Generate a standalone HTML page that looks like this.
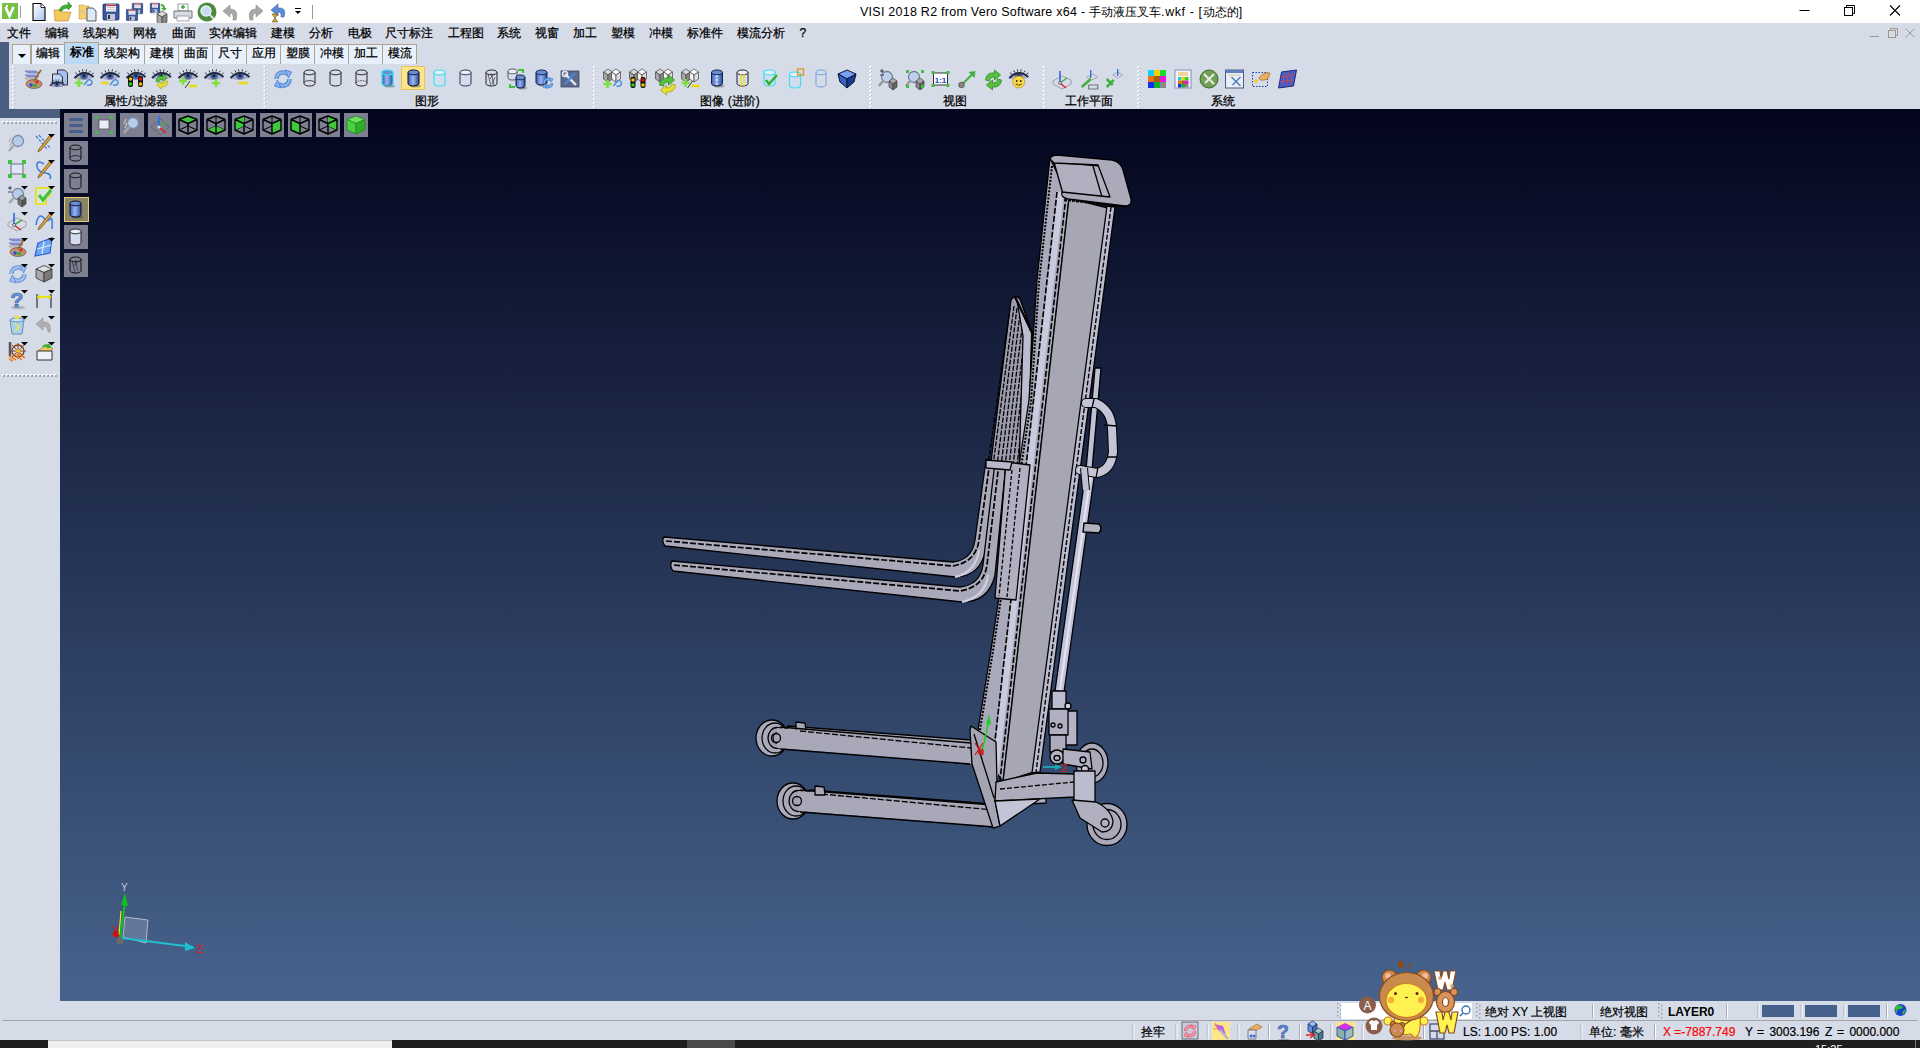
<!DOCTYPE html>
<html><head><meta charset="utf-8">
<style>
*{margin:0;padding:0;box-sizing:border-box}
html,body{width:1920px;height:1048px;overflow:hidden;background:#d6dbe8;font-family:"Liberation Sans",sans-serif;font-size:12px;color:#000}
.a{position:absolute}
#title{left:0;top:0;width:1920px;height:23px;background:#fff}
#menu{left:0;top:23px;width:1920px;height:19px;background:#d6dbe8}
#frameL{left:0;top:42px;width:9px;height:76px;background:#4c5e80}
#frameB{left:0;top:109px;width:60px;height:9px;background:#4c5e80}
#ribbon{left:9px;top:42px;width:1911px;height:67px;background:#d6dbe8}
#vp{left:60px;top:109px;width:1860px;height:892px;background:linear-gradient(#03051d,#47638d)}
#lbar{left:0;top:118px;width:60px;height:883px;background:#d6dbe8}
#st1{left:0;top:1001px;width:1920px;height:20px;background:#d6dbe8}
#st2{left:0;top:1021px;width:1920px;height:19px;background:#d6dbe8}
#task{left:0;top:1040px;width:1920px;height:8px;background:#1f1f1f}

#ttext{left:860px;top:5px;font-size:12.5px;white-space:nowrap;line-height:15px}
.mi{position:absolute;top:2px;line-height:16px;white-space:nowrap;-webkit-text-stroke:0.25px #000}
#tabs{left:0;top:0}
.tab{position:absolute;top:44px;height:20px;background:#e8f1fb;border:1px solid #aca48c;border-bottom:none;text-align:center;line-height:17px;white-space:nowrap;-webkit-text-stroke:0.25px #000}
.tab.act{top:42px;height:22px;background:#bcd9f5;font-weight:bold;line-height:19px;-webkit-text-stroke:0}
.glab{position:absolute;top:93px;width:100px;text-align:center;line-height:16px;white-space:nowrap;-webkit-text-stroke:0.25px #000}
.st{position:absolute;line-height:18px;white-space:nowrap;font-size:12px;-webkit-text-stroke:0.2px currentColor}
</style></head><body>

<div id="title" class="a">
 <svg class="a" style="left:0;top:0" width="320" height="23"><defs><linearGradient id="gdoc" x1="0" y1="0" x2="1" y2="1"><stop offset="0" stop-color="#fff"/><stop offset="1" stop-color="#a8c4f0"/></linearGradient></defs><rect x="2" y="3" width="16" height="16" fill="#76c043"/><path d="M5.5,7 L9.5,16 L13.5,7" fill="none" stroke="#fff" stroke-width="2.6"/><circle cx="7" cy="6" r="1.2" fill="#fff"/><path d="M20.5,6 V18" stroke="#9a9a9a"/><g transform="translate(29,2)"><path d="M4,1.5 h8 l4,4 v13 h-12z" fill="url(#gdoc)" stroke="#000" stroke-width="1.1"/><path d="M12,1.5 v4 h4" fill="#fff" stroke="#000" stroke-width=".8"/></g><g transform="translate(53,2)"><path d="M1,8 h6 l2,2 h9 l-3,9 h-13z" fill="#f4c860" stroke="#c09030" stroke-width=".7"/><path d="M6,9 Q8,2 15,3 L15,0 L19,4 L15,8 L15,6 Q10,6 9,9Z" fill="#40b030" stroke="#208020" stroke-width=".6"/></g><g transform="translate(78,2)"><path d="M1,3 h5 l1,1 h4 v5 h-10z M1,10 h5 l1,1 h4 v6 h-10z" fill="#f4d070" stroke="#c0a040" stroke-width=".6"/><path d="M9,6 h6 l3,3 v10 h-9z" fill="#dde8f8" stroke="#333" stroke-width=".8"/></g><g transform="translate(101,2)"><rect x="2" y="2" width="16" height="16" rx="1" fill="#3a5aa0" stroke="#1a2a60" stroke-width=".8"/><rect x="5" y="2.5" width="10" height="7" fill="#f4f4f8"/><path d="M5,3.5 h10" stroke="#e03030" stroke-width="1.2"/><path d="M6,5.5 h8 M6,7.5 h8" stroke="#aab" stroke-width=".6"/><rect x="6" y="12" width="8" height="6" fill="#c0c8d8"/><rect x="7" y="13" width="2" height="4" fill="#333"/></g><g transform="translate(125,2)"><g transform="translate(6,0) scale(.65)"><rect x="2" y="2" width="16" height="16" rx="1" fill="#3a5aa0" stroke="#1a2a60" stroke-width=".8"/><rect x="5" y="2.5" width="10" height="7" fill="#f4f4f8"/><path d="M5,3.5 h10" stroke="#e03030" stroke-width="1.2"/><path d="M6,5.5 h8 M6,7.5 h8" stroke="#aab" stroke-width=".6"/><rect x="6" y="12" width="8" height="6" fill="#c0c8d8"/><rect x="7" y="13" width="2" height="4" fill="#333"/></g><g transform="translate(0,6) scale(.7)"><rect x="2" y="2" width="16" height="16" rx="1" fill="#3a5aa0" stroke="#1a2a60" stroke-width=".8"/><rect x="5" y="2.5" width="10" height="7" fill="#f4f4f8"/><path d="M5,3.5 h10" stroke="#e03030" stroke-width="1.2"/><path d="M6,5.5 h8 M6,7.5 h8" stroke="#aab" stroke-width=".6"/><rect x="6" y="12" width="8" height="6" fill="#c0c8d8"/><rect x="7" y="13" width="2" height="4" fill="#333"/></g></g><g transform="translate(149,2)"><g transform="translate(0,0) scale(.6)"><rect x="2" y="2" width="16" height="16" rx="1" fill="#3a5aa0" stroke="#1a2a60" stroke-width=".8"/><rect x="5" y="2.5" width="10" height="7" fill="#f4f4f8"/><path d="M5,3.5 h10" stroke="#e03030" stroke-width="1.2"/><path d="M6,5.5 h8 M6,7.5 h8" stroke="#aab" stroke-width=".6"/><rect x="6" y="12" width="8" height="6" fill="#c0c8d8"/><rect x="7" y="13" width="2" height="4" fill="#333"/></g><g transform="translate(8,9)" stroke="#444" stroke-width=".7"><path d="M0,3 L5.0,0 L10,3 L5.0,6Z" fill="#d8d8d8"/><path d="M0,3 L5.0,6 L5.0,14 L0,11Z" fill="#a8a8a8"/><path d="M5.0,6 L10,3 L10,11 L5.0,14Z" fill="#888"/></g><path d="M12,2 Q16,2 16,6 L18,6 L15,9 L12,6 L14,6 Q14,4 12,4Z" fill="#40b030"/></g><g transform="translate(173,2)"><rect x="5" y="2" width="10" height="7" fill="#fff" stroke="#777" stroke-width=".7"/><path d="M10,3 v4 M8,5 h4" stroke="#30b030" stroke-width="1.5"/><path d="M1,9 h18 v7 h-18z" fill="#d8dce4" stroke="#555" stroke-width=".8"/><rect x="4" y="14" width="12" height="5" fill="#f8f8f8" stroke="#777" stroke-width=".6"/></g><g transform="translate(197,2)"><circle cx="10" cy="10" r="9.5" fill="#4a8a3a"/><circle cx="9" cy="9" r="5" fill="#c8dcf0" stroke="#e8f0f8" stroke-width="1.4"/><path d="M12.5,12.5 L17,17" stroke="#ddd" stroke-width="2.2"/></g><g transform="translate(221,2)"><path d="M15,18 Q18,7 9,7 L9,3 L2,9 L9,15 L9,11 Q13,11 12,18Z" fill="#a8a8a8" stroke="#888" stroke-width=".6"/></g><g transform="translate(245,2)"><path d="M5,18 Q2,7 11,7 L11,3 L18,9 L11,15 L11,11 Q7,11 8,18Z" fill="#a8a8a8" stroke="#888" stroke-width=".6"/></g><g transform="translate(269,2)"><path d="M15,15 Q18,5 9,6 L9,2 L2,8 L9,14 L9,10 Q13,10 12,15Z" fill="#5a8ad8" stroke="#3a60a0" stroke-width=".6"/><path d="M3,12 h6 l-3,4 l3,4 h-6 l3,-4z" fill="#d0a040" stroke="#705010" stroke-width=".6"/></g><path d="M295,8.5 h6" stroke="#000"/><path d="M295,11 h6 l-3,3z" fill="#000"/><path d="M312.5,5 V19" stroke="#9a9a9a"/></svg>
 <div class="a" id="ttext"><span style="letter-spacing:0.25px">VISI 2018 R2 from Vero Software x64 - </span><span style="font-size:12px">手动液压叉车</span><span style="letter-spacing:0.6px">.wkf - [</span><span style="font-size:12px">动态的</span>]</div>
 <svg class="a" style="left:1795px;top:5px" width="110" height="14">
  <path d="M4.5 5.5h10" stroke="#000" stroke-width="1"/>
  <rect x="49.5" y="2.5" width="8" height="8" fill="none" stroke="#000"/><path d="M51.5 2.5v-2h8v8h-2" fill="none" stroke="#000"/>
  <path d="M95 0.5l10 10M105 0.5l-10 10" stroke="#000" stroke-width="1.1"/>
 </svg>
</div>
<div id="menu" class="a"><span class="mi" style="left:7px">文件</span><span class="mi" style="left:45px">编辑</span><span class="mi" style="left:83px">线架构</span><span class="mi" style="left:133px">网格</span><span class="mi" style="left:171.5px">曲面</span><span class="mi" style="left:209px">实体编辑</span><span class="mi" style="left:271px">建模</span><span class="mi" style="left:309px">分析</span><span class="mi" style="left:347.5px">电极</span><span class="mi" style="left:385px">尺寸标注</span><span class="mi" style="left:447.5px">工程图</span><span class="mi" style="left:497px">系统</span><span class="mi" style="left:535px">视窗</span><span class="mi" style="left:573px">加工</span><span class="mi" style="left:611px">塑模</span><span class="mi" style="left:649px">冲模</span><span class="mi" style="left:687px">标准件</span><span class="mi" style="left:737px">模流分析</span><span class="mi" style="left:799.5px">?</span>
 <svg class="a" style="left:1866px;top:4px" width="54" height="14">
  <path d="M4 9.5h9" stroke="#9e968a"/>
  <rect x="22.5" y="3.5" width="7" height="7" fill="none" stroke="#9e968a"/><path d="M24.5 3.5v-2h7v7h-2" fill="none" stroke="#9e968a"/>
  <path d="M39.5 1.5l9 9M48.5 1.5l-9 9" stroke="#9e968a"/>
 </svg>
</div>
<div id="frameL" class="a"></div>
<div id="ribbon" class="a"></div>
<svg class="a" style="left:0;top:0" width="1320" height="110"><defs><linearGradient id="gcyl" x1="0" x2="1"><stop offset="0" stop-color="#3a5ab0"/><stop offset=".45" stop-color="#9ab8f0"/><stop offset="1" stop-color="#2a4aa0"/></linearGradient></defs><path d="M13,66 V108" stroke="#fff" stroke-width="2" stroke-dasharray="2,2"/><path d="M14,67 V108" stroke="#a8aab8" stroke-width="1" stroke-dasharray="1,3"/><path d="M264.5,66 V108" stroke="#fff" stroke-width="2" stroke-dasharray="2,2"/><path d="M265.5,67 V108" stroke="#a8aab8" stroke-width="1" stroke-dasharray="1,3"/><path d="M594,66 V108" stroke="#fff" stroke-width="2" stroke-dasharray="2,2"/><path d="M595,67 V108" stroke="#a8aab8" stroke-width="1" stroke-dasharray="1,3"/><path d="M870.5,66 V108" stroke="#fff" stroke-width="2" stroke-dasharray="2,2"/><path d="M871.5,67 V108" stroke="#a8aab8" stroke-width="1" stroke-dasharray="1,3"/><path d="M1044,66 V108" stroke="#fff" stroke-width="2" stroke-dasharray="2,2"/><path d="M1045,67 V108" stroke="#a8aab8" stroke-width="1" stroke-dasharray="1,3"/><path d="M1138.5,66 V108" stroke="#fff" stroke-width="2" stroke-dasharray="2,2"/><path d="M1139.5,67 V108" stroke="#a8aab8" stroke-width="1" stroke-dasharray="1,3"/><g transform="translate(23,69)"><path d="M2,2 h11 l3,2 h-11z M2,6 h11 l3,2 h-11z" fill="#8ca0e0" stroke="#5a6ab0" stroke-width=".6"/><path d="M2,9 h11 l2,2 h-11z" fill="#e0e0e0" stroke="#888" stroke-width=".6"/><ellipse cx="11" cy="15" rx="8" ry="4.5" fill="#c09070" stroke="#705040" stroke-width=".7"/><circle cx="8" cy="16" r="1.8" fill="#2050e0"/><circle cx="12" cy="16.5" r="1.8" fill="#20b040"/><circle cx="14" cy="13" r="1.6" fill="#e02020"/><path d="M18,1 L11,12" stroke="#a06020" stroke-width="1.6"/></g><g transform="translate(48.5,69)"><path d="M9,1 h7 l3,3 v12 h-10z" fill="#a8c0f0" stroke="#222" stroke-width=".9"/><path d="M4,5 h7 l3,3 v9 h-10z" fill="#c0d4f8" stroke="#222" stroke-width=".9"/><g transform="translate(1,10) scale(0.75)"><path d="M0.5,9 Q10,-0.5 19.5,8 Q11,12.5 0.5,9Z" fill="#a8b4d4" stroke="#b8a0c0" stroke-width=".8"/><circle cx="10" cy="6.8" r="3.8" fill="#4a64a0"/><circle cx="10" cy="6.8" r="1.5" fill="#18203a"/><path d="M0.5,9 Q10,-0.5 19.5,8" fill="none" stroke="#222a40" stroke-width="1.8"/><path d="M3,5.5 L1.5,3.5 M6,3.5 L5,1.5 M9,2.6 L8.5,0.5 M12,2.6 L12.5,0.5 M15,3.5 L16.5,1.8 M17.5,5.5 L19.5,4" stroke="#222a40" stroke-width="1"/></g></g><g transform="translate(74,69)"><g transform="translate(0,0) scale(1)"><path d="M0.5,9 Q10,-0.5 19.5,8 Q11,12.5 0.5,9Z" fill="#a8b4d4" stroke="#b8a0c0" stroke-width=".8"/><circle cx="10" cy="6.8" r="3.8" fill="#4a64a0"/><circle cx="10" cy="6.8" r="1.5" fill="#18203a"/><path d="M0.5,9 Q10,-0.5 19.5,8" fill="none" stroke="#222a40" stroke-width="1.8"/><path d="M3,5.5 L1.5,3.5 M6,3.5 L5,1.5 M9,2.6 L8.5,0.5 M12,2.6 L12.5,0.5 M15,3.5 L16.5,1.8 M17.5,5.5 L19.5,4" stroke="#222a40" stroke-width="1"/></g><path d="M1,14 h8 M5,10 v8" stroke="#80e040" stroke-width="2.6"/><path d="M10,16 L14,11 Q18,10 18,14 Q17,17 13,16" fill="none" stroke="#4a90e0" stroke-width="1.5"/></g><g transform="translate(100,69)"><g transform="translate(0,0) scale(1)"><path d="M0.5,9 Q10,-0.5 19.5,8 Q11,12.5 0.5,9Z" fill="#a8b4d4" stroke="#b8a0c0" stroke-width=".8"/><circle cx="10" cy="6.8" r="3.8" fill="#4a64a0"/><circle cx="10" cy="6.8" r="1.5" fill="#18203a"/><path d="M0.5,9 Q10,-0.5 19.5,8" fill="none" stroke="#222a40" stroke-width="1.8"/><path d="M3,5.5 L1.5,3.5 M6,3.5 L5,1.5 M9,2.6 L8.5,0.5 M12,2.6 L12.5,0.5 M15,3.5 L16.5,1.8 M17.5,5.5 L19.5,4" stroke="#222a40" stroke-width="1"/></g><path d="M1.5,14 h7" stroke="#e8dc10" stroke-width="2.6"/><path d="M10,16 L14,11 Q18,10 18,14 Q17,17 13,16" fill="none" stroke="#4a90e0" stroke-width="1.5"/></g><g transform="translate(126,69)"><g transform="translate(0,0) scale(1)"><path d="M0.5,9 Q10,-0.5 19.5,8 Q11,12.5 0.5,9Z" fill="#a8b4d4" stroke="#b8a0c0" stroke-width=".8"/><circle cx="10" cy="6.8" r="3.8" fill="#4a64a0"/><circle cx="10" cy="6.8" r="1.5" fill="#18203a"/><path d="M0.5,9 Q10,-0.5 19.5,8" fill="none" stroke="#222a40" stroke-width="1.8"/><path d="M3,5.5 L1.5,3.5 M6,3.5 L5,1.5 M9,2.6 L8.5,0.5 M12,2.6 L12.5,0.5 M15,3.5 L16.5,1.8 M17.5,5.5 L19.5,4" stroke="#222a40" stroke-width="1"/></g><g transform="translate(2,7)"><rect x="0" y="0" width="5" height="11" rx="2" fill="#111"/><circle cx="2.5" cy="3" r="1.8" fill="#f0c000"/><circle cx="2.5" cy="8" r="1.8" fill="#20d020"/><rect x="10" y="0" width="5" height="11" rx="2" fill="#111"/><circle cx="12.5" cy="3" r="1.8" fill="#e01010"/><circle cx="12.5" cy="8" r="1.8" fill="#f0c000"/></g></g><g transform="translate(151.5,69)"><g transform="translate(0,0) scale(1)"><path d="M0.5,9 Q10,-0.5 19.5,8 Q11,12.5 0.5,9Z" fill="#a8b4d4" stroke="#b8a0c0" stroke-width=".8"/><circle cx="10" cy="6.8" r="3.8" fill="#4a64a0"/><circle cx="10" cy="6.8" r="1.5" fill="#18203a"/><path d="M0.5,9 Q10,-0.5 19.5,8" fill="none" stroke="#222a40" stroke-width="1.8"/><path d="M3,5.5 L1.5,3.5 M6,3.5 L5,1.5 M9,2.6 L8.5,0.5 M12,2.6 L12.5,0.5 M15,3.5 L16.5,1.8 M17.5,5.5 L19.5,4" stroke="#222a40" stroke-width="1"/></g><g transform="translate(3,5) scale(.75)"><g transform="translate(0,0)"><path d="M2,10 Q3,2 11,3 L11,0 L17,5 L11,10 L11,7 Q6,7 6,11Z" fill="#58c040" stroke="#2a8a20" stroke-width=".8"/><path d="M18,10 Q17,18 9,17 L9,20 L3,15 L9,10 L9,13 Q14,13 14,9Z" fill="#e8e030" stroke="#b0a010" stroke-width=".8"/></g></g></g><g transform="translate(178,69)"><g transform="translate(0,0) scale(1)"><path d="M0.5,9 Q10,-0.5 19.5,8 Q11,12.5 0.5,9Z" fill="#a8b4d4" stroke="#b8a0c0" stroke-width=".8"/><circle cx="10" cy="6.8" r="3.8" fill="#4a64a0"/><circle cx="10" cy="6.8" r="1.5" fill="#18203a"/><path d="M0.5,9 Q10,-0.5 19.5,8" fill="none" stroke="#222a40" stroke-width="1.8"/><path d="M3,5.5 L1.5,3.5 M6,3.5 L5,1.5 M9,2.6 L8.5,0.5 M12,2.6 L12.5,0.5 M15,3.5 L16.5,1.8 M17.5,5.5 L19.5,4" stroke="#222a40" stroke-width="1"/></g><path d="M1,12 h8 M5,8 v8" stroke="#80e040" stroke-width="2.6"/><path d="M7,19 L12,12" stroke="#222" stroke-width=".9"/><path d="M11.0,17 h8" stroke="#e8dc10" stroke-width="2.6"/></g><g transform="translate(204,69)"><g transform="translate(0,0) scale(1)"><path d="M0.5,9 Q10,-0.5 19.5,8 Q11,12.5 0.5,9Z" fill="#a8b4d4" stroke="#b8a0c0" stroke-width=".8"/><circle cx="10" cy="6.8" r="3.8" fill="#4a64a0"/><circle cx="10" cy="6.8" r="1.5" fill="#18203a"/><path d="M0.5,9 Q10,-0.5 19.5,8" fill="none" stroke="#222a40" stroke-width="1.8"/><path d="M3,5.5 L1.5,3.5 M6,3.5 L5,1.5 M9,2.6 L8.5,0.5 M12,2.6 L12.5,0.5 M15,3.5 L16.5,1.8 M17.5,5.5 L19.5,4" stroke="#222a40" stroke-width="1"/></g><path d="M8,14 h8 M12,10 v8" stroke="#80e040" stroke-width="2.6"/></g><g transform="translate(230,69)"><g transform="translate(0,0) scale(1)"><path d="M0.5,9 Q10,-0.5 19.5,8 Q11,12.5 0.5,9Z" fill="#a8b4d4" stroke="#b8a0c0" stroke-width=".8"/><circle cx="10" cy="6.8" r="3.8" fill="#4a64a0"/><circle cx="10" cy="6.8" r="1.5" fill="#18203a"/><path d="M0.5,9 Q10,-0.5 19.5,8" fill="none" stroke="#222a40" stroke-width="1.8"/><path d="M3,5.5 L1.5,3.5 M6,3.5 L5,1.5 M9,2.6 L8.5,0.5 M12,2.6 L12.5,0.5 M15,3.5 L16.5,1.8 M17.5,5.5 L19.5,4" stroke="#222a40" stroke-width="1"/></g><path d="M8.5,14 h9" stroke="#e8dc10" stroke-width="2.6"/></g><g transform="translate(273,69)"><g transform="translate(0,0)"><path d="M3.5,10 A6.5,6.5 0 0 1 14.5,5.2" fill="none" stroke="#3f7ad0" stroke-width="4.2"/><path d="M3.5,10 A6.5,6.5 0 0 1 14.5,5.2" fill="none" stroke="#8ab4ec" stroke-width="2.6"/><path d="M12,1 L18.5,3 L15.5,9Z" fill="#8ab4ec" stroke="#3f7ad0" stroke-width=".8"/><path d="M16.5,10 A6.5,6.5 0 0 1 5.5,14.8" fill="none" stroke="#3f7ad0" stroke-width="4.2"/><path d="M16.5,10 A6.5,6.5 0 0 1 5.5,14.8" fill="none" stroke="#8ab4ec" stroke-width="2.6"/><path d="M8,19 L1.5,17 L4.5,11Z" fill="#8ab4ec" stroke="#3f7ad0" stroke-width=".8"/></g></g><g transform="translate(300,69)"><g fill="none" stroke="#222" stroke-width="1"><path d="M4,3.4 v11.2 A5.5,2.4 0 0 0 15,14.6 v-11.2"/><ellipse cx="9.5" cy="3.4" rx="5.5" ry="2.4"/></g><path d="M4,14 A5.5,2.4 0 0 1 15,14" fill="none" stroke="#222" stroke-width=".8"/></g><g transform="translate(326,69)"><g fill="none" stroke="#222" stroke-width="1"><path d="M4,3.4 v11.2 A5.5,2.4 0 0 0 15,14.6 v-11.2"/><ellipse cx="9.5" cy="3.4" rx="5.5" ry="2.4"/></g></g><g transform="translate(352,69)"><g fill="none" stroke="#222" stroke-width="1"><path d="M4,3.4 v11.2 A5.5,2.4 0 0 0 15,14.6 v-11.2"/><ellipse cx="9.5" cy="3.4" rx="5.5" ry="2.4"/></g><path d="M4,14 A5.5,2.4 0 0 1 15,14" fill="none" stroke="#222" stroke-width=".8" stroke-dasharray="1.5,1"/></g><g transform="translate(378,69)"><g stroke="#30e0f0" stroke-width="1.2"><path d="M4,3.4 v11.2 A5.5,2.4 0 0 0 15,14.6 v-11.2Z" fill="url(#gcyl)"/><ellipse cx="9.5" cy="3.4" rx="5.5" ry="2.4" fill="#6a8ed0"/></g><ellipse cx="11.5" cy="17" rx="5.5" ry="1.5" fill="#000" opacity=".25"/></g><rect x="401.5" y="66.5" width="23" height="23" fill="#fde58a" stroke="#e8c35a"/><g transform="translate(404,69)"><g stroke="#0a1030" stroke-width="1"><path d="M4,3.4 v11.2 A5.5,2.4 0 0 0 15,14.6 v-11.2Z" fill="url(#gcyl)"/><ellipse cx="9.5" cy="3.4" rx="5.5" ry="2.4" fill="#6a8ed0"/></g><ellipse cx="11.5" cy="17" rx="5.5" ry="1.5" fill="#000" opacity=".25"/></g><g transform="translate(430,69)"><g stroke="#40e0f0" stroke-width="1.2"><path d="M4,3.4 v11.2 A5.5,2.4 0 0 0 15,14.6 v-11.2Z" fill="#d4dcf0"/><ellipse cx="9.5" cy="3.4" rx="5.5" ry="2.4" fill="#e8eefa"/></g></g><g transform="translate(456,69)"><g stroke="#334" stroke-width="1"><path d="M4,3.4 v11.2 A5.5,2.4 0 0 0 15,14.6 v-11.2Z" fill="#d4dcf0"/><ellipse cx="9.5" cy="3.4" rx="5.5" ry="2.4" fill="#e8eefa"/></g></g><g transform="translate(482,69)"><g fill="none" stroke="#222" stroke-width="1"><path d="M4,3.4 v11.2 A5.5,2.4 0 0 0 15,14.6 v-11.2"/><ellipse cx="9.5" cy="3.4" rx="5.5" ry="2.4"/></g><path d="M6,5 L9,17 M9,4 L12,16 M12,5 L8,10 M13,8 L10,15" stroke="#333" stroke-width=".7"/></g><g transform="translate(507,69)"><g stroke="#555" stroke-width="1"><path d="M1,2.4 v6.2 A4.5,2.4 0 0 0 10,8.6 v-6.2Z" fill="#d4dcf0"/><ellipse cx="5.5" cy="2.4" rx="4.5" ry="2.4" fill="#e8eefa"/></g><g stroke="#10204a" stroke-width="1"><path d="M9,8.4 v8.2 A4.5,2.4 0 0 0 18,16.6 v-8.2Z" fill="url(#gcyl)"/><ellipse cx="13.5" cy="8.4" rx="4.5" ry="2.4" fill="#6a8ed0"/></g><ellipse cx="15.5" cy="19" rx="4.5" ry="1.5" fill="#000" opacity=".25"/><path d="M11,1 h5 v3" stroke="#40c040" stroke-width="2" fill="none"/><path d="M3,15 v3 h5" stroke="#40c040" stroke-width="2" fill="none"/></g><g transform="translate(534,69)"><g stroke="#10204a" stroke-width="1"><path d="M2,3.4 v10.2 A5.5,2.4 0 0 0 13,13.6 v-10.2Z" fill="url(#gcyl)"/><ellipse cx="7.5" cy="3.4" rx="5.5" ry="2.4" fill="#6a8ed0"/></g><ellipse cx="9.5" cy="16" rx="5.5" ry="1.5" fill="#000" opacity=".25"/><g transform="translate(8,8) scale(.6)"><path d="M3.5,10 A6.5,6.5 0 0 1 14.5,5.2" fill="none" stroke="#3070c0" stroke-width="4.2"/><path d="M3.5,10 A6.5,6.5 0 0 1 14.5,5.2" fill="none" stroke="#7ab0f0" stroke-width="2.6"/><path d="M12,1 L18.5,3 L15.5,9Z" fill="#7ab0f0" stroke="#3070c0" stroke-width=".8"/><path d="M16.5,10 A6.5,6.5 0 0 1 5.5,14.8" fill="none" stroke="#3070c0" stroke-width="4.2"/><path d="M16.5,10 A6.5,6.5 0 0 1 5.5,14.8" fill="none" stroke="#7ab0f0" stroke-width="2.6"/><path d="M8,19 L1.5,17 L4.5,11Z" fill="#7ab0f0" stroke="#3070c0" stroke-width=".8"/></g></g><g transform="translate(560,69)"><rect x="1" y="2" width="18" height="16" fill="#5a6a88" stroke="#3a4a68" stroke-width=".8"/><path d="M5,5 L16,16" stroke="#e8e8f0" stroke-width="2.4"/><path d="M15,4 L5,15" stroke="#4a88e0" stroke-width="2.2"/><circle cx="5" cy="5" r="2.5" fill="none" stroke="#e8e8f0" stroke-width="1.5"/></g><g transform="translate(602.5,69)"><g transform="translate(1,0)" stroke="#444" stroke-width=".7"><path d="M0,3 L4.5,0 L9,3 L4.5,6Z" fill="#d8d8d8"/><path d="M0,3 L4.5,6 L4.5,13 L0,10Z" fill="#a8a8a8"/><path d="M4.5,6 L9,3 L9,10 L4.5,13Z" fill="#888"/></g><g transform="translate(9,0)" stroke="#444" stroke-width=".7"><path d="M0,3 L4.5,0 L9,3 L4.5,6Z" fill="#fafafa"/><path d="M0,3 L4.5,6 L4.5,13 L0,10Z" fill="#f4f4f4"/><path d="M4.5,6 L9,3 L9,10 L4.5,13Z" fill="#dcdcdc"/></g><path d="M1,15 h8 M5,11 v8" stroke="#80e040" stroke-width="2.6"/><path d="M11,17 L15,12 Q19,11 19,15 Q18,18 14,17" fill="none" stroke="#4a90e0" stroke-width="1.5"/></g><g transform="translate(628.5,69)"><g transform="translate(1,0)" stroke="#444" stroke-width=".7"><path d="M0,3 L4.5,0 L9,3 L4.5,6Z" fill="#d8d8d8"/><path d="M0,3 L4.5,6 L4.5,13 L0,10Z" fill="#a8a8a8"/><path d="M4.5,6 L9,3 L9,10 L4.5,13Z" fill="#888"/></g><g transform="translate(9,0)" stroke="#444" stroke-width=".7"><path d="M0,3 L4.5,0 L9,3 L4.5,6Z" fill="#fafafa"/><path d="M0,3 L4.5,6 L4.5,13 L0,10Z" fill="#f4f4f4"/><path d="M4.5,6 L9,3 L9,10 L4.5,13Z" fill="#dcdcdc"/></g><g transform="translate(2,8)"><rect x="0" y="0" width="5" height="11" rx="2" fill="#111"/><circle cx="2.5" cy="3" r="1.8" fill="#f0c000"/><circle cx="2.5" cy="8" r="1.8" fill="#20d020"/><rect x="10" y="0" width="5" height="11" rx="2" fill="#111"/><circle cx="12.5" cy="3" r="1.8" fill="#e01010"/><circle cx="12.5" cy="8" r="1.8" fill="#f0c000"/></g></g><g transform="translate(654.5,69)"><g transform="translate(1,0)" stroke="#444" stroke-width=".7"><path d="M0,3 L4.5,0 L9,3 L4.5,6Z" fill="#d8d8d8"/><path d="M0,3 L4.5,6 L4.5,13 L0,10Z" fill="#a8a8a8"/><path d="M4.5,6 L9,3 L9,10 L4.5,13Z" fill="#888"/></g><g transform="translate(9,0)" stroke="#444" stroke-width=".7"><path d="M0,3 L4.5,0 L9,3 L4.5,6Z" fill="#fafafa"/><path d="M0,3 L4.5,6 L4.5,13 L0,10Z" fill="#f4f4f4"/><path d="M4.5,6 L9,3 L9,10 L4.5,13Z" fill="#dcdcdc"/></g><g transform="translate(3,6)"><path d="M2,10 Q3,2 11,3 L11,0 L17,5 L11,10 L11,7 Q6,7 6,11Z" fill="#58c040" stroke="#2a8a20" stroke-width=".8"/><path d="M18,10 Q17,18 9,17 L9,20 L3,15 L9,10 L9,13 Q14,13 14,9Z" fill="#e8e030" stroke="#b0a010" stroke-width=".8"/></g></g><g transform="translate(680.5,69)"><g transform="translate(1,0)" stroke="#444" stroke-width=".7"><path d="M0,3 L4.5,0 L9,3 L4.5,6Z" fill="#d8d8d8"/><path d="M0,3 L4.5,6 L4.5,13 L0,10Z" fill="#a8a8a8"/><path d="M4.5,6 L9,3 L9,10 L4.5,13Z" fill="#888"/></g><g transform="translate(9,0)" stroke="#444" stroke-width=".7"><path d="M0,3 L4.5,0 L9,3 L4.5,6Z" fill="#fafafa"/><path d="M0,3 L4.5,6 L4.5,13 L0,10Z" fill="#f4f4f4"/><path d="M4.5,6 L9,3 L9,10 L4.5,13Z" fill="#dcdcdc"/></g><path d="M1,14 h8 M5,10 v8" stroke="#80e040" stroke-width="2.6"/><path d="M7,19 L12,12" stroke="#222" stroke-width=".9"/><path d="M11.0,17 h8" stroke="#e8dc10" stroke-width="2.6"/></g><g transform="translate(707.5,69)"><g stroke="#10204a" stroke-width="1"><path d="M4,3.4 v11.2 A5.5,2.4 0 0 0 15,14.6 v-11.2Z" fill="url(#gcyl)"/><ellipse cx="9.5" cy="3.4" rx="5.5" ry="2.4" fill="#6a8ed0"/></g><ellipse cx="11.5" cy="17" rx="5.5" ry="1.5" fill="#000" opacity=".25"/><path d="M9.5,6 v10" stroke="#fff" stroke-width="1" stroke-dasharray="2,2"/></g><g transform="translate(733,69)"><g stroke="#222" stroke-width="1"><path d="M4,3.4 v11.2 A5.5,2.4 0 0 0 15,14.6 v-11.2Z" fill="#d4dcf0"/><ellipse cx="9.5" cy="3.4" rx="5.5" ry="2.4" fill="#e8eefa"/></g><path d="M8,5 v12 M11,5 v12" stroke="#e8e020" stroke-width="1.4"/></g><g transform="translate(760,69)"><g stroke="#40e0f0" stroke-width="1.2"><path d="M4,3.4 v11.2 A5.5,2.4 0 0 0 15,14.6 v-11.2Z" fill="#d4dcf0"/><ellipse cx="9.5" cy="3.4" rx="5.5" ry="2.4" fill="#e8eefa"/></g><path d="M6,11 L9,15 L17,6" stroke="#30b030" stroke-width="2.5" fill="none"/></g><g transform="translate(785.5,69)"><g stroke="#40e0f0" stroke-width="1.2"><path d="M4,5.4 v11.2 A5.5,2.4 0 0 0 15,16.6 v-11.2Z" fill="#d4dcf0"/><ellipse cx="9.5" cy="5.4" rx="5.5" ry="2.4" fill="#e8eefa"/></g><rect x="12" y="0" width="6" height="6" fill="none" stroke="#e09020" stroke-width="1.3"/></g><g transform="translate(811,69)"><g fill="none" stroke="#70a0e0" stroke-width="1"><path d="M5,3.4 v12.2 A5.0,2.4 0 0 0 15,15.6 v-12.2"/><ellipse cx="10.0" cy="3.4" rx="5.0" ry="2.4"/></g></g><g transform="translate(837,69)"><path d="M1,5 L10,1 L19,5 L10,10Z" fill="#7aa0f0" stroke="#0a1838"/><path d="M1,5 L10,10 L10,19 L3,13Z" fill="#3a60c0" stroke="#0a1838"/><path d="M19,5 L10,10 L10,19 L17,13Z" fill="#1a3a90" stroke="#0a1838"/></g><g transform="translate(878,69)"><circle cx="9" cy="8" r="5.5" fill="#c0d0e8" stroke="#7080a0" stroke-width="1.3"/><path d="M5,12 L1,17" stroke="#999" stroke-width="2.5"/><g transform="translate(11,9)" stroke="#444" stroke-width=".7"><path d="M0,3 L4.0,0 L8,3 L4.0,6Z" fill="#aaa"/><path d="M0,3 L4.0,6 L4.0,12 L0,9Z" fill="#888"/><path d="M4.0,6 L8,3 L8,9 L4.0,12Z" fill="#666"/></g><path d="M2,2 h4 M4,0 v4 M2,6 h4" stroke="#222" stroke-width=".8"/></g><g transform="translate(905,69)"><circle cx="9" cy="8" r="5.5" fill="#c0d0e8" stroke="#7080a0" stroke-width="1.3"/><path d="M5,12 L1,17" stroke="#999" stroke-width="2.5"/><g transform="translate(11,9)" stroke="#444" stroke-width=".7"><path d="M0,3 L4.0,0 L8,3 L4.0,6Z" fill="#aaa"/><path d="M0,3 L4.0,6 L4.0,12 L0,9Z" fill="#888"/><path d="M4.0,6 L8,3 L8,9 L4.0,12Z" fill="#666"/></g><path d="M1,1 h3v3h-3z M16,1 h3v3h-3z M1,16 h3v3h-3z M16,16 h3v3h-3z" fill="#40c040"/></g><g transform="translate(930.5,69)"><rect x="3" y="4" width="14" height="12" fill="#fff" stroke="#333"/><text x="10" y="13.5" font-size="8" text-anchor="middle" font-family="Liberation Sans" fill="#2040c0" font-weight="bold">1:1</text><path d="M1,2 h3v3h-3z M16,2 h3v3h-3z M1,15 h3v3h-3z M16,15 h3v3h-3z" fill="#40c040"/></g><g transform="translate(957.5,69)"><path d="M4,16 L16,4" stroke="#40b040" stroke-width="2"/><path d="M11,3 L18,2 L17,9Z" fill="#40b040"/><circle cx="4" cy="16" r="2.8" fill="#888" stroke="#444" stroke-width=".7"/></g><g transform="translate(982.5,69)"><g transform="translate(1,1)"><path d="M2,10 Q3,2 11,3 L11,0 L17,5 L11,10 L11,7 Q6,7 6,11Z" fill="#58c040" stroke="#2a8a20" stroke-width=".8"/><path d="M18,10 Q17,18 9,17 L9,20 L3,15 L9,10 L9,13 Q14,13 14,9Z" fill="#58c040" stroke="#2a8a20" stroke-width=".8"/></g></g><g transform="translate(1008.75,69)"><g transform="translate(0,0) scale(1)"><path d="M0.5,9 Q10,-0.5 19.5,8 Q11,12.5 0.5,9Z" fill="#a8b4d4" stroke="#b8a0c0" stroke-width=".8"/><circle cx="10" cy="6.8" r="3.8" fill="#4a64a0"/><circle cx="10" cy="6.8" r="1.5" fill="#18203a"/><path d="M0.5,9 Q10,-0.5 19.5,8" fill="none" stroke="#222a40" stroke-width="1.8"/><path d="M3,5.5 L1.5,3.5 M6,3.5 L5,1.5 M9,2.6 L8.5,0.5 M12,2.6 L12.5,0.5 M15,3.5 L16.5,1.8 M17.5,5.5 L19.5,4" stroke="#222a40" stroke-width="1"/></g><circle cx="10" cy="13" r="6" fill="#f8d840" stroke="#c09020" stroke-width=".7"/><circle cx="8" cy="12" r=".9" fill="#222"/><circle cx="12" cy="12" r=".9" fill="#222"/><path d="M7,15 Q10,17.5 13,15" stroke="#222" fill="none" stroke-width=".8"/></g><g transform="translate(1052,69)"><path d="M1,12 L10,7 L19,11 L19,15 L10,20 L1,15Z" fill="#d8dcea" stroke="#888" stroke-width=".7"/><path d="M8,14 V2" stroke="#2060e0" stroke-width="1.5"/><path d="M8,14 L15,9" stroke="#40b040" stroke-width="1.5"/><path d="M8,14 L14,19" stroke="#e02020" stroke-width="1.5"/><circle cx="8" cy="14" r="1.6" fill="#ccc" stroke="#444" stroke-width=".6"/></g><g transform="translate(1078.75,69)"><path d="M8,8 L14,5 L19,8 L13,11Z" fill="#d8dcea" stroke="#888" stroke-width=".6"/><path d="M12,9 V1" stroke="#2060e0" stroke-width="1.2"/><path d="M3,18 L12,10" stroke="#40b040" stroke-width="2.5"/><path d="M10,16 h9 v4 h-9z" fill="none" stroke="#777" stroke-width="1.2"/></g><g transform="translate(1103.75,69)"><path d="M9,6 L14,3 L19,6 L14,9Z" fill="#d8dcea" stroke="#888" stroke-width=".6"/><path d="M14,7 V0" stroke="#2060e0" stroke-width="1.2"/><path d="M3,10 L9,16 M3,18 L10,11" stroke="#40b040" stroke-width="2.5"/></g><g transform="translate(1147,69)"><rect x="1" y="1" width="6" height="6" fill="#10d0f8"/><rect x="7" y="1" width="6" height="6" fill="#f8d000"/><rect x="13" y="1" width="6" height="6" fill="#10e030"/><rect x="1" y="7" width="6" height="6" fill="#f07010"/><rect x="7" y="7" width="6" height="6" fill="#a06010"/><rect x="13" y="7" width="6" height="6" fill="#f010e0"/><rect x="1" y="13" width="6" height="6" fill="#1030f0"/><rect x="7" y="13" width="6" height="6" fill="#10b030"/><rect x="13" y="13" width="6" height="6" fill="#888"/></g><g transform="translate(1173,69)"><rect x="2" y="1" width="16" height="18" fill="#f4f4fa" stroke="#8090b0"/><path d="M5,4 h10 M5,6 h10" stroke="#f0b040"/><rect x="5.0" y="8.0" width="3.5" height="3.5" fill="#10d0f8"/><rect x="8.5" y="8.0" width="3.5" height="3.5" fill="#f8d000"/><rect x="12.0" y="8.0" width="3.5" height="3.5" fill="#10e030"/><rect x="5.0" y="11.5" width="3.5" height="3.5" fill="#f07010"/><rect x="8.5" y="11.5" width="3.5" height="3.5" fill="#a06010"/><rect x="12.0" y="11.5" width="3.5" height="3.5" fill="#f010e0"/><rect x="5.0" y="15.0" width="3.5" height="3.5" fill="#1030f0"/><rect x="8.5" y="15.0" width="3.5" height="3.5" fill="#10b030"/><rect x="12.0" y="15.0" width="3.5" height="3.5" fill="#888"/></g><g transform="translate(1199,69)"><circle cx="10" cy="10" r="9" fill="#70a050" stroke="#3a6a30"/><path d="M5,5 L15,15 M15,5 L6,14" stroke="#e8e8e8" stroke-width="2.2"/></g><g transform="translate(1224.5,69)"><rect x="1" y="1" width="18" height="18" fill="#e8eef8" stroke="#4a5a80"/><rect x="1" y="1" width="18" height="3" fill="#6080c0"/><path d="M4,6 h12" stroke="#c0a040" stroke-dasharray="1,1"/><path d="M7,8 L16,17 M16,8 L8,16" stroke="#5080c0" stroke-width="1.5"/></g><g transform="translate(1251,69)"><rect x="1.5" y="3.5" width="15" height="14" fill="none" stroke="#2040a0" stroke-dasharray="1.5,1.5"/><path d="M8,9 Q12,3 19,4 L17,10 Q12,12 9,11Z" fill="#e8b060" stroke="#a06020" stroke-width=".6"/><path d="M3,12 h4 M5,10 v4" stroke="#e8d020" stroke-width="1.5"/></g><g transform="translate(1277.5,69)"><path d="M4,3 L19,1 L16,17 L1,19Z" fill="#3a60d0" stroke="#1a2a80"/><path d="M7,4 L5,17 M11,3 L9,17 M15,2 L13,17 M3,8 L17,6 M2,13 L16,11" stroke="#e04040" stroke-width=".8"/></g></svg><div class="glab" style="left:86px">属性/过滤器</div><div class="glab" style="left:377px">图形</div><div class="glab" style="left:680px">图像 (进阶)</div><div class="glab" style="left:905px">视图</div><div class="glab" style="left:1039px">工作平面</div><div class="glab" style="left:1173px">系统</div>
<div id="tabs" class="a"><div class="tab" style="left:12px;width:19px"><svg width="19" height="20"><path d="M5 9h8l-4 4z" fill="#000"/></svg></div><div class="tab" style="left:31px;width:34px">编辑</div><div class="tab act" style="left:64px;width:35px">标准</div><div class="tab" style="left:98px;width:47px">线架构</div><div class="tab" style="left:144px;width:35px">建模</div><div class="tab" style="left:178px;width:35px">曲面</div><div class="tab" style="left:212px;width:35px">尺寸</div><div class="tab" style="left:246px;width:35px">应用</div><div class="tab" style="left:280px;width:35px">塑膜</div><div class="tab" style="left:314px;width:35px">冲模</div><div class="tab" style="left:348px;width:35px">加工</div><div class="tab" style="left:382px;width:35px">模流</div></div>
<div id="vp" class="a"></div>
<svg class="a" style="left:0;top:0" width="1920" height="1048" viewBox="0 0 1920 1048">
<g stroke="#000" stroke-width="1.3" stroke-linejoin="round" fill="#a9a9b8">
<!-- mesh panel -->
<path d="M1011,300 Q1015,294 1020,299 L1032,333 L1028,470 L990,470 Z" fill="#9c9cae"/>
<g stroke="#000" stroke-width="1.3" fill="none" stroke-dasharray="5,1.5">
<path d="M1010,308 L988,466"/><path d="M1014,306 L993,466"/><path d="M1017,308 L997,466"/><path d="M1020,314 L1001,466"/><path d="M1023,320 L1005,466"/><path d="M1026,326 L1009,466"/><path d="M1029,332 L1013,466"/><path d="M1031,345 L1017,466"/><path d="M1031,380 L1022,466"/>
</g>
<path d="M1017,300 L1032,333 L1028,470 L1019,470 L1023,336 Z" fill="#bcbcd0"/>
<path d="M1015,297 L1032,333 L1028,470" fill="none" stroke-width="2"/>
<!-- column left side strip -->
<path d="M1050,158 L1069,198 L1003,782 L976,742 L991,650 L1010,525 L1029,400 L1037,280 Z" fill="#a9a9bb"/>
<path d="M1052,166 L1039,282 L1031,402 L1012,526 L993,651 L979,736" fill="none" stroke-width="2" stroke-dasharray="2,1.5"/>
<path d="M1061,192 L995,776" fill="none" stroke="#cacade" stroke-width="6"/>
<path d="M1057,192 L991,776" fill="none" stroke-width="1.6" stroke-dasharray="6,2"/>
<path d="M1066,196 L1000,780" fill="none" stroke-width="1.6" stroke-dasharray="6,2"/>
<!-- forks -->
<path d="M664,537 L953,562 Q972,560 975,540 L986,460 L997,461 L986,548 Q981,577 955,577 L665,546 Q661,541 664,537 Z" fill="#a9a9ba"/>
<path d="M666,541 L953,566 Q976,562 979,540 L990,461" fill="none" stroke-width="1.7" stroke-dasharray="6,2"/>
<path d="M672,561 L960,587 Q980,585 983,565 L995,462 L1006,463 L995,575 Q989,602 962,602 L673,571 Q669,566 672,561 Z" fill="#a9a9ba"/>
<path d="M674,565 L960,591 Q984,587 987,565 L999,463" fill="none" stroke-width="1.7" stroke-dasharray="6,2"/>
<path d="M955,577 Q976,572 979,550" fill="none" stroke="#d0d0e4" stroke-width="2"/>
<path d="M962,602 Q985,597 988,575" fill="none" stroke="#d0d0e4" stroke-width="2"/>
<!-- carriage plates -->
<path d="M1006,462 L1030,465 L1016,600 L995,598 Z" fill="#b0b0c2"/>
<path d="M1012,470 L999,596 M1020,468 L1007,597" fill="none" stroke-dasharray="4,2"/>
<path d="M986,460 L1012,462 L1010,470 L986,468Z" fill="#b8b8ca"/>
<!-- inner back of channel -->
<path d="M1054,162 L1101,166 L1111,198 L1063,194 Z" fill="#b0b0c0"/>
<path d="M1093,166 L1102,197" fill="none"/>
<!-- column front face -->
<path d="M1069,198 L1108,208 L1033,772 L1003,782 Z" fill="#a6a6b5"/>

<!-- right strip -->
<path d="M1107,206 L1115,207 L1040,772 L1032,773 Z" fill="#bcbcd0"/>
<path d="M1111,207 L1036,772" fill="none" stroke-width="1.4" stroke-dasharray="5,2"/>
<!-- top cap -->
<path d="M1050,159 Q1051,155 1057,155 L1112,160 Q1121,162 1123,170 L1131,199 Q1132,206 1125,206 L1068,199 Q1060,197 1062,192 L1110,197 L1098,165 L1054,163 Z" fill="#aaaaba"/>
<path d="M1064,200 L1126,207" fill="none" stroke-width="1.6" stroke-dasharray="3,1"/>
<!-- hydraulic rod -->
<path d="M1095,368 L1101,368 L1092,470 L1086,470 Z" fill="#c0c0d4"/>
<path d="M1086,470 L1095,471 L1064,692 L1055,691 Z" fill="#c4c4d8"/>
<path d="M1091,472 L1060,690" fill="none" stroke="#e4e4f4" stroke-width="2"/>
<!-- D handle -->
<path d="M1086,403 L1096,403 Q1111,410 1112,428 L1113,452 Q1111,470 1097,473 L1080,470" fill="none" stroke="#000" stroke-width="10" stroke-linecap="round"/>
<path d="M1086,403 L1096,403 Q1111,410 1112,428 L1113,452 Q1111,470 1097,473 L1080,470" fill="none" stroke="#c4c4d8" stroke-width="8" stroke-linecap="round"/>
<path d="M1094,399 L1092,408 M1104,425 L1117,426 M1107,457 L1117,457 M1098,467 L1096,478" fill="none"/>
<path d="M1084,468 L1086,490" fill="none" stroke="#000" stroke-width="8"/><path d="M1084,468 L1086,490" fill="none" stroke="#c0c0d4" stroke-width="6"/>
<!-- pedal -->
<path d="M1084,523 L1099,524 Q1103,528 1099,533 L1083,532 Z" fill="#b0b0c0" stroke-width="1.5"/>
<!-- upper leg -->
<path d="M788,726 L971,740 L970,764 L784,746 Z" fill="#a8a8b8"/>
<path d="M790,731 L971,747" fill="none" stroke-dasharray="6,2"/>
<path d="M792,735 L971,752" fill="none"/>
<path d="M796,722 L805,723 L806,731 L796,731Z" fill="#a8a8b8"/>
<ellipse cx="772" cy="738" rx="16" ry="18" fill="#a9a9b9"/>
<ellipse cx="775" cy="738" rx="13" ry="15" fill="none"/>
<ellipse cx="777" cy="738" rx="9" ry="10.5" fill="#a0a0b0"/>
<ellipse cx="777" cy="738" rx="4" ry="5" fill="none"/>
<path d="M777,728 L972,744 L971,764 L777,748Z" fill="#a8a8b8" stroke="none"/>
<path d="M780,727 L971,743 M780,749 L970,764" fill="none"/>
<path d="M800,731 L971,748" fill="none" stroke-dasharray="6,2"/>
<circle cx="776" cy="738" r="4.5" fill="none"/>
<!-- lower leg -->
<path d="M810,790 L993,804 L995,827 L806,810 Z" fill="#a8a8b8"/>
<ellipse cx="793" cy="801" rx="16" ry="18" fill="#a9a9b9"/>
<ellipse cx="796" cy="801" rx="13" ry="15" fill="none"/>
<ellipse cx="798" cy="801" rx="9" ry="10.5" fill="#a0a0b0"/>
<path d="M798,791 L993,806 L995,827 L798,811Z" fill="#a8a8b8" stroke="none"/>
<path d="M800,790 L993,805 M800,812 L995,827" fill="none"/>
<path d="M822,794 L993,810" fill="none" stroke-dasharray="6,2"/>
<path d="M815,786 L824,787 L825,795 L815,795Z" fill="#a8a8b8"/>
<circle cx="797" cy="801" r="4.5" fill="none"/>
<!-- gusset / base -->
<path d="M971,726 L996,742 L997,782 L995,800 L1000,826 L993,828 L972,764 L970,730 Z" fill="#a4a4b4"/>
<path d="M974,734 L994,798" fill="none"/>
<path d="M1000,797 L1046,795 L1046,803 L1000,806Z" fill="#b0b0c2"/>
<path d="M996,782 L1037,773 L1075,774 L1075,797 L995,801 Z" fill="#acacbc"/>
<path d="M1000,789 L1074,782" fill="none" stroke-dasharray="5,2"/>
<path d="M995,801 L1040,799 L1000,826 Z" fill="#c4c4d8"/>
<!-- hydraulic body -->
<path d="M1065,711 L1077,711 L1077,745 L1065,745 Z" fill="#b4b4c6"/>
<path d="M1052,691 L1066,691 L1066,709 L1052,709 Z" fill="#bcbcd0"/>
<path d="M1049,709 L1068,709 L1068,735 L1049,735 Z" fill="#b0b0c2"/>
<circle cx="1068" cy="706" r="3" fill="#d0d0e0"/>
<circle cx="1053" cy="725" r="2" fill="none"/><circle cx="1060" cy="726" r="2" fill="none"/>
<path d="M1050,735 L1066,735 L1066,752 L1050,752 Z" fill="#acacbc"/>
<!-- rear wheels -->
<ellipse cx="1092" cy="763" rx="16" ry="20" fill="#a9a9b9"/>
<ellipse cx="1092" cy="763" rx="11" ry="14" fill="none"/>
<ellipse cx="1057" cy="757" rx="7" ry="7" fill="#b4b4c6"/>
<ellipse cx="1057" cy="758" rx="3" ry="2.5" fill="none"/>
<path d="M1063,749 L1090,752 L1092,769 L1063,764Z" fill="#b0b0c2"/>
<circle cx="1083" cy="760" r="3" fill="none"/>
<circle cx="1085" cy="769" r="3.5" fill="#c8c8d8"/>
<path d="M1074,771 L1095,771 L1095,802 L1074,802 Z" fill="#bcbcd0"/>
<ellipse cx="1107" cy="824.5" rx="20" ry="21" fill="#a9a9b9"/>
<ellipse cx="1107" cy="824.5" rx="14" ry="15" fill="none"/>
<path d="M1072,800 L1096,802 Q1112,810 1113,822 Q1112,832 1102,832 L1080,818 Z" fill="#b0b0c0"/>
<ellipse cx="1105" cy="823" rx="4" ry="4" fill="none"/>
</g>
</svg>
<svg class="a" style="left:100px;top:875px" width="110" height="80" viewBox="100 875 110 80">
<path d="M125,917 L148,920 L146,943 L123,937Z" fill="#8c9ab4" fill-opacity=".45" stroke="#c8cede" stroke-width=".8"/>
<path d="M122,938 L193,947" stroke="#20c0d0" stroke-width="2"/>
<path d="M185,942 L195,948 L185,951Z" fill="#20c0d0"/>
<text x="196" y="953" font-size="11" fill="#f01010" font-family="Liberation Sans">Z</text>
<path d="M119,935 L121,911" stroke="#f0e020" stroke-width="1.2"/>
<path d="M120,940 L125,902" stroke="#10c020" stroke-width="2"/>
<path d="M121,905 L125,893 L128,906Z" fill="#10c020"/>
<text x="121" y="891" font-size="10" fill="#c8c8d0" font-family="Liberation Sans">Y</text>
<path d="M112,926 L119,936 M118,926 L112,936" stroke="#e01010" stroke-width="1"/>
<ellipse cx="116" cy="934" rx="2.5" ry="3.5" fill="#d01010"/>
<circle cx="120" cy="941" r="3.5" fill="#6a6a6a"/>
</svg>
<svg class="a" style="left:960px;top:700px" width="120" height="90" viewBox="960 700 120 90">
<path d="M982,752 L989,720" stroke="#20d020" stroke-width="1.5"/>
<path d="M986,724 L989,714 L991,725Z" fill="#20d020"/>
<path d="M975,743 L983,755 M983,743 L975,755" stroke="#e01010" stroke-width="1.2"/>
<ellipse cx="981" cy="752" rx="3" ry="3.5" fill="#c02020" opacity=".8"/>
<path d="M1043,767 L1058,767" stroke="#20a0b0" stroke-width="2"/>
<path d="M1055,764 L1062,767 L1055,770Z" fill="#20a0b0"/>
<text x="1061" y="772" font-size="10" fill="#f01010" font-family="Liberation Sans">Z</text>
</svg>

<div id="frameB" class="a"></div>
<div id="lbar" class="a"></div>
<svg class="a" style="left:0;top:0" width="60" height="400"><rect x="2" y="121" width="2" height="2" fill="#fff"/><rect x="3" y="122" width="2" height="2" fill="#a0a4b4"/><rect x="6" y="121" width="2" height="2" fill="#fff"/><rect x="7" y="122" width="2" height="2" fill="#a0a4b4"/><rect x="10" y="121" width="2" height="2" fill="#fff"/><rect x="11" y="122" width="2" height="2" fill="#a0a4b4"/><rect x="14" y="121" width="2" height="2" fill="#fff"/><rect x="15" y="122" width="2" height="2" fill="#a0a4b4"/><rect x="18" y="121" width="2" height="2" fill="#fff"/><rect x="19" y="122" width="2" height="2" fill="#a0a4b4"/><rect x="22" y="121" width="2" height="2" fill="#fff"/><rect x="23" y="122" width="2" height="2" fill="#a0a4b4"/><rect x="26" y="121" width="2" height="2" fill="#fff"/><rect x="27" y="122" width="2" height="2" fill="#a0a4b4"/><rect x="30" y="121" width="2" height="2" fill="#fff"/><rect x="31" y="122" width="2" height="2" fill="#a0a4b4"/><rect x="34" y="121" width="2" height="2" fill="#fff"/><rect x="35" y="122" width="2" height="2" fill="#a0a4b4"/><rect x="38" y="121" width="2" height="2" fill="#fff"/><rect x="39" y="122" width="2" height="2" fill="#a0a4b4"/><rect x="42" y="121" width="2" height="2" fill="#fff"/><rect x="43" y="122" width="2" height="2" fill="#a0a4b4"/><rect x="46" y="121" width="2" height="2" fill="#fff"/><rect x="47" y="122" width="2" height="2" fill="#a0a4b4"/><rect x="50" y="121" width="2" height="2" fill="#fff"/><rect x="51" y="122" width="2" height="2" fill="#a0a4b4"/><rect x="54" y="121" width="2" height="2" fill="#fff"/><rect x="55" y="122" width="2" height="2" fill="#a0a4b4"/><rect x="2" y="374" width="2" height="2" fill="#fff"/><rect x="3" y="375" width="2" height="2" fill="#a0a4b4"/><rect x="6" y="374" width="2" height="2" fill="#fff"/><rect x="7" y="375" width="2" height="2" fill="#a0a4b4"/><rect x="10" y="374" width="2" height="2" fill="#fff"/><rect x="11" y="375" width="2" height="2" fill="#a0a4b4"/><rect x="14" y="374" width="2" height="2" fill="#fff"/><rect x="15" y="375" width="2" height="2" fill="#a0a4b4"/><rect x="18" y="374" width="2" height="2" fill="#fff"/><rect x="19" y="375" width="2" height="2" fill="#a0a4b4"/><rect x="22" y="374" width="2" height="2" fill="#fff"/><rect x="23" y="375" width="2" height="2" fill="#a0a4b4"/><rect x="26" y="374" width="2" height="2" fill="#fff"/><rect x="27" y="375" width="2" height="2" fill="#a0a4b4"/><rect x="30" y="374" width="2" height="2" fill="#fff"/><rect x="31" y="375" width="2" height="2" fill="#a0a4b4"/><rect x="34" y="374" width="2" height="2" fill="#fff"/><rect x="35" y="375" width="2" height="2" fill="#a0a4b4"/><rect x="38" y="374" width="2" height="2" fill="#fff"/><rect x="39" y="375" width="2" height="2" fill="#a0a4b4"/><rect x="42" y="374" width="2" height="2" fill="#fff"/><rect x="43" y="375" width="2" height="2" fill="#a0a4b4"/><rect x="46" y="374" width="2" height="2" fill="#fff"/><rect x="47" y="375" width="2" height="2" fill="#a0a4b4"/><rect x="50" y="374" width="2" height="2" fill="#fff"/><rect x="51" y="375" width="2" height="2" fill="#a0a4b4"/><rect x="54" y="374" width="2" height="2" fill="#fff"/><rect x="55" y="375" width="2" height="2" fill="#a0a4b4"/><g transform="translate(7,133)"><circle cx="11" cy="8" r="5.5" fill="#b8cce8" stroke="#7888a8" stroke-width="1.3"/><path d="M7,12 L2,18" stroke="#aaa" stroke-width="2.5"/><path d="M4,4 L2,9 M5,8 L3,13" stroke="#bbb" stroke-width="1.5"/></g><g transform="translate(34,133)"><path d="M2,3 L13,16 M5,2 L16,15" stroke="#3a7ae0" stroke-width="1.2" stroke-dasharray="3,1.5"/><path d="M16,2 L5,16 L4,19 L7,17 L18,4Z" fill="#d8a040" stroke="#6a4a10" stroke-width=".7"/><path d="M16,2 L18,4" stroke="#e03030" stroke-width="2"/></g><path d="M48,134 h7 l-3.5,3.5z" fill="#000"/><g transform="translate(7,159)"><rect x="4" y="5" width="12" height="10" fill="#dde6f8" stroke="#555" stroke-width=".8"/><path d="M1,1 h4v4h-4z M15,1 h4v4h-4z M1,15 h4v4h-4z M15,15 h4v4h-4z" fill="#40c040"/></g><g transform="translate(34,159)"><path d="M10,5 Q2,0 3,8 Q5,14 12,14 Q18,15 16,20" fill="none" stroke="#3a7ae0" stroke-width="1.5"/><path d="M16,2 L5,16 L4,19 L7,17 L18,4Z" fill="#d8a040" stroke="#6a4a10" stroke-width=".7"/><path d="M16,2 L18,4" stroke="#e03030" stroke-width="2"/></g><path d="M48,160 h7 l-3.5,3.5z" fill="#000"/><g transform="translate(7,185)"><circle cx="11" cy="9" r="5.5" fill="#b8cce8" stroke="#7888a8" stroke-width="1.3"/><path d="M7,13 L2,18" stroke="#aaa" stroke-width="2.5"/><g transform="translate(11,10)" stroke="#444" stroke-width=".7"><path d="M0,3 L4.0,0 L8,3 L4.0,6Z" fill="#999"/><path d="M0,3 L4.0,6 L4.0,12 L0,9Z" fill="#777"/><path d="M4.0,6 L8,3 L8,9 L4.0,12Z" fill="#555"/></g><path d="M1,3 h4 M3,1 v4 M1,7 h4" stroke="#222" stroke-width=".8"/></g><g transform="translate(34,185)"><path d="M2,3 h14 v8 h-4 v8 h-10z" fill="#d8e8d8" stroke="#e8e000" stroke-width="1.6"/><path d="M5,10 L9,15 L17,5" stroke="#40c040" stroke-width="3" fill="none"/></g><path d="M21,186 h7 l-3.5,3.5z" fill="#000"/><path d="M48,186 h7 l-3.5,3.5z" fill="#000"/><g transform="translate(7,211)"><path d="M1,12 L10,7 L19,11 L19,15 L10,20 L1,15Z" fill="#d8dcea" stroke="#888" stroke-width=".7"/><path d="M7,14 V2" stroke="#2060e0" stroke-width="1.5"/><path d="M7,14 L15,9" stroke="#40b040" stroke-width="1.5"/><path d="M7,14 L14,19" stroke="#e02020" stroke-width="1.5"/><circle cx="7" cy="14" r="1.6" fill="#ccc" stroke="#444" stroke-width=".6"/></g><g transform="translate(34,211)"><path d="M2,14 Q4,2 9,6 Q13,12 16,8 Q19,5 18,18" fill="none" stroke="#3a7ae0" stroke-width="1.5"/><path d="M16,2 L5,16 L4,19 L7,17 L18,4Z" fill="#d8a040" stroke="#6a4a10" stroke-width=".7"/><path d="M16,2 L18,4" stroke="#e03030" stroke-width="2"/></g><path d="M21,212 h7 l-3.5,3.5z" fill="#000"/><path d="M48,212 h7 l-3.5,3.5z" fill="#000"/><g transform="translate(7,237)"><path d="M2,2 h11 l3,2 h-11z M2,6 h11 l3,2 h-11z" fill="#8ca0e0" stroke="#5a6ab0" stroke-width=".6"/><path d="M2,9 h11 l2,2 h-11z" fill="#e0e0e0" stroke="#888" stroke-width=".6"/><ellipse cx="11" cy="15" rx="8" ry="4.5" fill="#c09070" stroke="#705040" stroke-width=".7"/><circle cx="8" cy="16" r="1.8" fill="#2050e0"/><circle cx="12" cy="16.5" r="1.8" fill="#20b040"/><circle cx="14" cy="13" r="1.6" fill="#e02020"/><path d="M18,1 L11,12" stroke="#a06020" stroke-width="1.6"/></g><g transform="translate(34,237)"><path d="M4,6 L18,1 L16,16 L1,19Z" fill="#70a8f0" stroke="#2a60d0" stroke-width="1.2"/><path d="M10,4 L8,17 M3,12 L17,8" stroke="#dde8ff" stroke-width="1.3"/></g><path d="M21,238 h7 l-3.5,3.5z" fill="#000"/><path d="M48,238 h7 l-3.5,3.5z" fill="#000"/><g transform="translate(7,263)"><g transform="translate(1,1)"><path d="M3.5,10 A6.5,6.5 0 0 1 14.5,5.2" fill="none" stroke="#5a8ad0" stroke-width="4.2"/><path d="M3.5,10 A6.5,6.5 0 0 1 14.5,5.2" fill="none" stroke="#a0c0ec" stroke-width="2.6"/><path d="M12,1 L18.5,3 L15.5,9Z" fill="#a0c0ec" stroke="#5a8ad0" stroke-width=".8"/><path d="M16.5,10 A6.5,6.5 0 0 1 5.5,14.8" fill="none" stroke="#5a8ad0" stroke-width="4.2"/><path d="M16.5,10 A6.5,6.5 0 0 1 5.5,14.8" fill="none" stroke="#a0c0ec" stroke-width="2.6"/><path d="M8,19 L1.5,17 L4.5,11Z" fill="#a0c0ec" stroke="#5a8ad0" stroke-width=".8"/></g></g><g transform="translate(34,263)"><path d="M2,6 L10,2.5 L18,6 L10,9.5Z" fill="#e0e0e0" stroke="#333" stroke-width=".8"/><path d="M2,6 L10,9.5 L10,19 L2,15Z" fill="#a8a8a8" stroke="#333" stroke-width=".8"/><path d="M18,6 L10,9.5 L10,19 L18,15Z" fill="#7a7a7a" stroke="#333" stroke-width=".8"/></g><path d="M21,264 h7 l-3.5,3.5z" fill="#000"/><path d="M48,264 h7 l-3.5,3.5z" fill="#000"/><g transform="translate(7,289)"><ellipse cx="11" cy="18.5" rx="7" ry="1.8" fill="#000" opacity=".18"/><text x="10" y="18" font-size="21" font-weight="bold" text-anchor="middle" font-family="Liberation Sans" fill="#6a98e0" stroke="#3a60a0" stroke-width=".7">?</text></g><g transform="translate(34,289)"><path d="M3,5 V19 M17,5 V19" stroke="#555" stroke-width="1.5"/><path d="M3,8 H17" stroke="#e8e000" stroke-width="1.8"/><path d="M3,8 l3,-2.5 v5z M17,8 l-3,-2.5 v5z" fill="#e8e000"/></g><path d="M21,290 h7 l-3.5,3.5z" fill="#000"/><path d="M48,290 h7 l-3.5,3.5z" fill="#000"/><g transform="translate(7,315)"><path d="M3,5 h14 l-2,14 h-10z" fill="#a8d0f0" stroke="#5080a0" stroke-width=".8"/><ellipse cx="10" cy="5" rx="7" ry="2" fill="#c0e0f8" stroke="#5080a0" stroke-width=".8"/><path d="M8,1 h4 v3 h-4z" fill="#f0e020"/><path d="M8,8 L12,12 L8,16" stroke="#e8e840" stroke-width="1.5" fill="none"/></g><g transform="translate(34,315)"><path d="M16,17 Q18,6 9,7 L9,3 L2,9 L9,15 L9,11 Q14,11 14,17Z" fill="#b0b0b0" stroke="#909090" stroke-width=".6"/></g><path d="M21,316 h7 l-3.5,3.5z" fill="#000"/><path d="M48,316 h7 l-3.5,3.5z" fill="#000"/><g transform="translate(7,341)"><circle cx="11" cy="10" r="6" fill="none" stroke="#8a4020" stroke-width="1.3"/><path d="M11,2 V18 M3,10 H19 M5,4 L17,16 M17,4 L5,16" stroke="#8a4020" stroke-width="1"/><circle cx="11" cy="10" r="2" fill="#f0c020"/><path d="M3,1 V15" stroke="#555" stroke-width="2.5"/><path d="M2,15 L9,19 M2,18 L6,20 M7,13 L15,19 M10,12 L18,17" stroke="#f08020" stroke-width="1.5"/></g><g transform="translate(34,341)"><path d="M5,9 L14,3 L19,8 L12,13Z" fill="#f0c860" stroke="#a08030" stroke-width=".7"/><path d="M3,10 h15 v9 h-15z" fill="#eef2fa" stroke="#333" stroke-width="1"/><path d="M8,6 Q10,2 14,4 l1,-2 l2,5 l-5,0 l1,-1.5" fill="#30b030"/></g><path d="M21,342 h7 l-3.5,3.5z" fill="#000"/><path d="M48,342 h7 l-3.5,3.5z" fill="#000"/></svg>
<svg class="a" style="left:0;top:0" width="400" height="290"><defs><linearGradient id="gcyl2" x1="0" x2="1"><stop offset="0" stop-color="#3a5ab0"/><stop offset=".45" stop-color="#9ab8f0"/><stop offset="1" stop-color="#2a4aa0"/></linearGradient></defs><rect x="64" y="113" width="24" height="24" fill="#7e8091"/><g transform="translate(66,115)"><rect x="3" y="3" width="14" height="3" rx="1" fill="#46608e"/><rect x="3" y="9" width="14" height="3" rx="1" fill="#46608e"/><rect x="3" y="15" width="14" height="3" rx="1" fill="#46608e"/></g><rect x="92" y="113" width="24" height="24" fill="#7e8091"/><g transform="translate(94,115)"><rect x="5" y="5" width="10" height="9" fill="#e8eefc" stroke="#555" stroke-width=".8"/><path d="M1,1 h3v3h-3z M16,1 h3v3h-3z M1,16 h3v3h-3z M16,16 h3v3h-3z" fill="#40c040"/></g><rect x="120" y="113" width="24" height="24" fill="#7e8091"/><g transform="translate(122,115)"><circle cx="11" cy="8" r="5.5" fill="#b8cce8" stroke="#7888a8" stroke-width="1.3"/><path d="M7,12 L2,18" stroke="#aaa" stroke-width="2.5"/><path d="M4,4 L2,9 M5,8 L3,13" stroke="#bbb" stroke-width="1.5"/></g><rect x="148" y="113" width="24" height="24" fill="#7e8091"/><g transform="translate(150,115)"><path d="M1,12 L11,4 L19,12 L11,20Z" fill="none" stroke="#555" stroke-width=".6"/><path d="M9,12 V1" stroke="#2070f0" stroke-width="1.6"/><path d="M9,12 L17,7" stroke="#40b040" stroke-width="1.3"/><path d="M9,12 L16,18" stroke="#e02020" stroke-width="1.6"/><circle cx="9" cy="12" r="1.6" fill="#ddd"/></g><rect x="176" y="113" width="24" height="24" fill="#7e8091"/><g transform="translate(178,115)"><path d="M10,1 V11 M1,15 L10,11 L19,15" fill="none" stroke="#000" stroke-width="1"/><path d="M1,4.5 L10,1 L19,4.5 L10,8.5Z" fill="#3ec83a"/><path d="M1,4.5 L10,1 L19,4.5 L19,15 L10,19 L1,15Z M1,4.5 L10,8.5 L19,4.5 M10,8.5 V19" fill="none" stroke="#000" stroke-width="1.4" stroke-linejoin="round"/></g><rect x="204" y="113" width="24" height="24" fill="#7e8091"/><g transform="translate(206,115)"><path d="M10,1 V11 M1,15 L10,11 L19,15" fill="none" stroke="#000" stroke-width="1"/><path d="M1,15 L10,11 L19,15 L10,19Z" fill="#3ec83a"/><path d="M1,4.5 L10,1 L19,4.5 L19,15 L10,19 L1,15Z M1,4.5 L10,8.5 L19,4.5 M10,8.5 V19" fill="none" stroke="#000" stroke-width="1.4" stroke-linejoin="round"/></g><rect x="232" y="113" width="24" height="24" fill="#7e8091"/><g transform="translate(234,115)"><path d="M10,1 V11 M1,15 L10,11 L19,15" fill="none" stroke="#000" stroke-width="1"/><path d="M1,4.5 L10,1 L10,11 L1,15Z" fill="#3ec83a"/><path d="M1,4.5 L10,1 L19,4.5 L19,15 L10,19 L1,15Z M1,4.5 L10,8.5 L19,4.5 M10,8.5 V19" fill="none" stroke="#000" stroke-width="1.4" stroke-linejoin="round"/></g><rect x="260" y="113" width="24" height="24" fill="#7e8091"/><g transform="translate(262,115)"><path d="M10,1 V11 M1,15 L10,11 L19,15" fill="none" stroke="#000" stroke-width="1"/><path d="M19,4.5 L10,8.5 L10,19 L19,15Z" fill="#3ec83a"/><path d="M1,4.5 L10,1 L19,4.5 L19,15 L10,19 L1,15Z M1,4.5 L10,8.5 L19,4.5 M10,8.5 V19" fill="none" stroke="#000" stroke-width="1.4" stroke-linejoin="round"/></g><rect x="288" y="113" width="24" height="24" fill="#7e8091"/><g transform="translate(290,115)"><path d="M10,1 V11 M1,15 L10,11 L19,15" fill="none" stroke="#000" stroke-width="1"/><path d="M1,4.5 L10,8.5 L10,19 L1,15Z" fill="#3ec83a"/><path d="M1,4.5 L10,1 L19,4.5 L19,15 L10,19 L1,15Z M1,4.5 L10,8.5 L19,4.5 M10,8.5 V19" fill="none" stroke="#000" stroke-width="1.4" stroke-linejoin="round"/></g><rect x="316" y="113" width="24" height="24" fill="#7e8091"/><g transform="translate(318,115)"><path d="M10,1 V11 M1,15 L10,11 L19,15" fill="none" stroke="#000" stroke-width="1"/><path d="M19,4.5 L10,1 L10,11 L19,15Z" fill="#3ec83a"/><path d="M1,4.5 L10,1 L19,4.5 L19,15 L10,19 L1,15Z M1,4.5 L10,8.5 L19,4.5 M10,8.5 V19" fill="none" stroke="#000" stroke-width="1.4" stroke-linejoin="round"/></g><rect x="344" y="113" width="24" height="24" fill="#7e8091"/><g transform="translate(346,115)"><path d="M1,4.5 L10,1 L19,4.5 L10,8.5Z" fill="#70e060" stroke="#1a8a1a" stroke-width=".8"/><path d="M1,4.5 L10,8.5 L10,19 L1,15Z" fill="#48d040" stroke="#1a8a1a" stroke-width=".8"/><path d="M19,4.5 L10,8.5 L10,19 L19,15Z" fill="#30b028" stroke="#1a8a1a" stroke-width=".8"/></g><rect x="64" y="141" width="24" height="24" fill="#7e8091"/><g transform="translate(66,143)"><g fill="none" stroke="#111" stroke-width="1"><path d="M4,4.4 v11.2 A5.5,2.4 0 0 0 15,15.6 v-11.2"/><ellipse cx="9.5" cy="4.4" rx="5.5" ry="2.4"/></g><path d="M4,15 A5.5,2.4 0 0 1 15,15" fill="none" stroke="#111" stroke-width=".8"/></g><rect x="64" y="169" width="24" height="24" fill="#7e8091"/><g transform="translate(66,171)"><g fill="none" stroke="#111" stroke-width="1"><path d="M4,4.4 v11.2 A5.5,2.4 0 0 0 15,15.6 v-11.2"/><ellipse cx="9.5" cy="4.4" rx="5.5" ry="2.4"/></g></g><rect x="64.5" y="197.5" width="24" height="24" fill="#8a8468" stroke="#e8cc70"/><g transform="translate(66,199)"><g stroke="#0a1030" stroke-width="1"><path d="M4,4.4 v11.2 A5.5,2.4 0 0 0 15,15.6 v-11.2Z" fill="url(#gcyl)"/><ellipse cx="9.5" cy="4.4" rx="5.5" ry="2.4" fill="#6a8ed0"/></g><ellipse cx="11.5" cy="18" rx="5.5" ry="1.5" fill="#000" opacity=".25"/></g><rect x="64" y="225" width="24" height="24" fill="#7e8091"/><g transform="translate(66,227)"><g stroke="#222" stroke-width="1"><path d="M4,4.4 v11.2 A5.5,2.4 0 0 0 15,15.6 v-11.2Z" fill="#d4dcf0"/><ellipse cx="9.5" cy="4.4" rx="5.5" ry="2.4" fill="#e8eefa"/></g></g><rect x="64" y="253" width="24" height="24" fill="#7e8091"/><g transform="translate(66,255)"><g fill="none" stroke="#111" stroke-width="1"><path d="M4,4.4 v11.2 A5.5,2.4 0 0 0 15,15.6 v-11.2"/><ellipse cx="9.5" cy="4.4" rx="5.5" ry="2.4"/></g><path d="M6,6 L9,17 M9,5 L12,16 M12,6 L8,11" stroke="#222" stroke-width=".7"/></g></svg>
<div id="st1" class="a"></div>
<div id="st2" class="a"></div>
<div id="task" class="a"></div>
<div class="a" style="left:48px;top:1040px;width:344px;height:8px;background:#f0f0f0;border-top:1px solid #c4c4c4"></div><div class="a" style="left:687px;top:1040px;width:48px;height:8px;background:#4a4a4a"></div><div class="a" style="left:1815px;top:1043px;font-size:11px;color:#fff;line-height:12px">15:25</div><div class="a" style="left:1915px;top:1040px;width:1px;height:8px;background:#777"></div><div class="a" style="left:2px;top:1020px;width:1916px;height:1px;background:#a4a4a8"></div><svg class="a" style="left:1100px;top:995px" width="820" height="46"><path d="M492.5,9 V23" stroke="#a8aab4" stroke-width="1"/><path d="M493.5,9 V23" stroke="#fff" stroke-width="1"/><path d="M626.5,9 V23" stroke="#a8aab4" stroke-width="1"/><path d="M627.5,9 V23" stroke="#fff" stroke-width="1"/><path d="M658.0,9 V23" stroke="#a8aab4" stroke-width="1"/><path d="M659.0,9 V23" stroke="#fff" stroke-width="1"/><path d="M701.0999999999999,9 V23" stroke="#a8aab4" stroke-width="1"/><path d="M702.0999999999999,9 V23" stroke="#fff" stroke-width="1"/><path d="M744.0,9 V23" stroke="#a8aab4" stroke-width="1"/><path d="M745.0,9 V23" stroke="#fff" stroke-width="1"/><path d="M786.5,9 V23" stroke="#a8aab4" stroke-width="1"/><path d="M787.5,9 V23" stroke="#fff" stroke-width="1"/><path d="M33.0,29 V44" stroke="#a8aab4" stroke-width="1"/><path d="M34.0,29 V44" stroke="#fff" stroke-width="1"/><path d="M76.0,29 V44" stroke="#a8aab4" stroke-width="1"/><path d="M77.0,29 V44" stroke="#fff" stroke-width="1"/><path d="M107.20000000000005,29 V44" stroke="#a8aab4" stroke-width="1"/><path d="M108.20000000000005,29 V44" stroke="#fff" stroke-width="1"/><path d="M138.0,29 V44" stroke="#a8aab4" stroke-width="1"/><path d="M139.0,29 V44" stroke="#fff" stroke-width="1"/><path d="M168.5,29 V44" stroke="#a8aab4" stroke-width="1"/><path d="M169.5,29 V44" stroke="#fff" stroke-width="1"/><path d="M199.5,29 V44" stroke="#a8aab4" stroke-width="1"/><path d="M200.5,29 V44" stroke="#fff" stroke-width="1"/><path d="M231.0,29 V44" stroke="#a8aab4" stroke-width="1"/><path d="M232.0,29 V44" stroke="#fff" stroke-width="1"/><path d="M262.20000000000005,29 V44" stroke="#a8aab4" stroke-width="1"/><path d="M263.20000000000005,29 V44" stroke="#fff" stroke-width="1"/><path d="M323.5,29 V44" stroke="#a8aab4" stroke-width="1"/><path d="M324.5,29 V44" stroke="#fff" stroke-width="1"/><path d="M481.0999999999999,29 V44" stroke="#a8aab4" stroke-width="1"/><path d="M482.0999999999999,29 V44" stroke="#fff" stroke-width="1"/><path d="M554.5,29 V44" stroke="#a8aab4" stroke-width="1"/><path d="M555.5,29 V44" stroke="#fff" stroke-width="1"/><rect x="237" y="8" width="1.5" height="1.5" fill="#9aa0b0"/><rect x="240" y="10" width="1.5" height="1.5" fill="#9aa0b0"/><rect x="237" y="12" width="1.5" height="1.5" fill="#9aa0b0"/><rect x="240" y="14" width="1.5" height="1.5" fill="#9aa0b0"/><rect x="237" y="16" width="1.5" height="1.5" fill="#9aa0b0"/><rect x="240" y="18" width="1.5" height="1.5" fill="#9aa0b0"/><rect x="237" y="20" width="1.5" height="1.5" fill="#9aa0b0"/><rect x="240" y="22" width="1.5" height="1.5" fill="#9aa0b0"/><rect x="376" y="8" width="1.5" height="1.5" fill="#9aa0b0"/><rect x="379" y="10" width="1.5" height="1.5" fill="#9aa0b0"/><rect x="376" y="12" width="1.5" height="1.5" fill="#9aa0b0"/><rect x="379" y="14" width="1.5" height="1.5" fill="#9aa0b0"/><rect x="376" y="16" width="1.5" height="1.5" fill="#9aa0b0"/><rect x="379" y="18" width="1.5" height="1.5" fill="#9aa0b0"/><rect x="376" y="20" width="1.5" height="1.5" fill="#9aa0b0"/><rect x="379" y="22" width="1.5" height="1.5" fill="#9aa0b0"/><rect x="558" y="8" width="1.5" height="1.5" fill="#9aa0b0"/><rect x="561" y="10" width="1.5" height="1.5" fill="#9aa0b0"/><rect x="558" y="12" width="1.5" height="1.5" fill="#9aa0b0"/><rect x="561" y="14" width="1.5" height="1.5" fill="#9aa0b0"/><rect x="558" y="16" width="1.5" height="1.5" fill="#9aa0b0"/><rect x="561" y="18" width="1.5" height="1.5" fill="#9aa0b0"/><rect x="558" y="20" width="1.5" height="1.5" fill="#9aa0b0"/><rect x="561" y="22" width="1.5" height="1.5" fill="#9aa0b0"/><rect x="241" y="8" width="131" height="16" fill="#fff"/><circle cx="366" cy="15" r="4" fill="none" stroke="#3a70c0" stroke-width="1.4"/><path d="M363,18 L360,21" stroke="#3a70c0" stroke-width="1.6"/><rect x="662" y="10" width="32" height="12" fill="#46618b"/><rect x="705" y="10" width="32" height="12" fill="#46618b"/><rect x="748" y="10" width="32" height="12" fill="#46618b"/><circle cx="800.5" cy="15" r="6" fill="#1a40d0"/><path d="M796,11 Q800,9 803,12 Q801,15 798,14 Q796,17 797,19 Q794,16 796,11Z M803,16 Q806,15 806,13 Q806,18 802,20Z" fill="#30c030"/><rect x="82" y="27" width="16" height="17" fill="#c8ccd8" stroke="#6a6e80"/><g transform="translate(80,26)"><g transform="translate(3,3) scale(.7)"><g transform="translate(0,0)"><path d="M3.5,10 A6.5,6.5 0 0 1 14.5,5.2" fill="none" stroke="#e04060" stroke-width="4.2"/><path d="M3.5,10 A6.5,6.5 0 0 1 14.5,5.2" fill="none" stroke="#f0a0b0" stroke-width="2.6"/><path d="M12,1 L18.5,3 L15.5,9Z" fill="#f0a0b0" stroke="#e04060" stroke-width=".8"/><path d="M16.5,10 A6.5,6.5 0 0 1 5.5,14.8" fill="none" stroke="#e04060" stroke-width="4.2"/><path d="M16.5,10 A6.5,6.5 0 0 1 5.5,14.8" fill="none" stroke="#f0a0b0" stroke-width="2.6"/><path d="M8,19 L1.5,17 L4.5,11Z" fill="#f0a0b0" stroke="#e04060" stroke-width=".8"/></g></g></g><rect x="112" y="27" width="18" height="18" fill="#fde58a"/><g transform="translate(111,26)"><path d="M3,3 L12,5 L15,14 L8,10Z" fill="#c060e0"/><path d="M9,9 L17,18" stroke="#b0b8d0" stroke-width="2.5"/><path d="M4,2 L6,6 M2,8 L6,8" stroke="#e0a020"/></g><g transform="translate(143,26)"><path d="M6,8 L14,3 L19,6 L12,10Z" fill="#e8b060" stroke="#906020" stroke-width=".6"/><path d="M5,9 h8 v9 h-8z" fill="#dde" stroke="#556" stroke-width=".7"/><circle cx="8" cy="15" r="1.5" fill="#3070d0"/><circle cx="11" cy="15" r="1.5" fill="#3070d0"/></g><g transform="translate(173,26)"><text x="10" y="17" font-size="19" font-weight="bold" text-anchor="middle" font-family="Liberation Sans" fill="#5a88d0" stroke="#3a60a0" stroke-width=".6">?</text><ellipse cx="11" cy="19" rx="6" ry="1.3" fill="#000" opacity=".25"/></g><g transform="translate(205,26)"><g transform="translate(3,0)" stroke="#224" stroke-width=".7"><path d="M0,3 L4.5,0 L9,3 L4.5,6Z" fill="#90c0f8"/><path d="M0,3 L4.5,6 L4.5,13 L0,10Z" fill="#5a90e0"/><path d="M4.5,6 L9,3 L9,10 L4.5,13Z" fill="#3a70c0"/></g><g transform="translate(9,7)" stroke="#223" stroke-width=".7"><path d="M0,3 L4.5,0 L9,3 L4.5,6Z" fill="#a0c8d0"/><path d="M0,3 L4.5,6 L4.5,13 L0,10Z" fill="#6a9aa8"/><path d="M4.5,6 L9,3 L9,10 L4.5,13Z" fill="#4a7a88"/></g><path d="M1,14 H9 M5,11 L9,14 L5,17" stroke="#e02020" stroke-width="1.5" fill="none"/></g><rect x="236" y="27" width="19" height="18" fill="#fde58a"/><g transform="translate(235,26)"><path d="M2,6 L10,2 L18,6 L10,10Z" fill="#d030e8"/><path d="M2,6 L10,10 L10,19 L2,15Z" fill="#8ab0a8" stroke="#3050c0" stroke-width="1"/><path d="M18,6 L10,10 L10,19 L18,15Z" fill="#9ac0b8" stroke="#3050c0" stroke-width="1"/></g><g transform="translate(327,26)"><rect x="3" y="3" width="14" height="15" fill="none" stroke="#4a5070" stroke-width="1.3"/><path d="M3,10 H17 M10,10 V18" stroke="#4a5070" stroke-width="1.3"/></g></svg><div class="st" style="left:1485px;top:1003px">绝对 XY 上视图</div><div class="st" style="left:1600px;top:1003px">绝对视图</div><div class="st" style="left:1668px;top:1003px;font-weight:bold;font-size:12px;-webkit-text-stroke:0">LAYER0</div><div class="st" style="left:1141px;top:1023px">拴牢</div><div class="st" style="left:1463px;top:1023px">LS: 1.00 PS: 1.00</div><div class="st" style="left:1589px;top:1023px">单位: 毫米</div><div class="st" style="left:1663px;top:1023px;color:#f00">X =-7887.749</div><div class="st" style="left:1745px;top:1023px;color:#000">Y</div><div class="st" style="left:1757px;top:1023px;color:#000">=</div><div class="st" style="left:1769.4px;top:1023px;color:#000">3003.196</div><div class="st" style="left:1825px;top:1023px;color:#000">Z</div><div class="st" style="left:1837px;top:1023px;color:#000">=</div><div class="st" style="left:1849.4px;top:1023px;color:#000">0000.000</div><svg class="a" style="left:1350px;top:960px" width="130" height="85" viewBox="1350 960 130 85">
<g stroke="#8a4a1c" stroke-width="1.2">
<ellipse cx="1407" cy="1038" rx="15" ry="2.5" fill="#c98a4e" stroke="none" opacity=".85"/>
<circle cx="1388" cy="1021" r="4" fill="#fff150" stroke="#d07a20"/><circle cx="1424" cy="1021" r="4" fill="#fff150" stroke="#d07a20"/>
<path d="M1394,1017 Q1407,1015 1420,1017 Q1421,1030 1418,1035 L1416,1037 Q1413,1038 1412,1035 L1410,1034 Q1402,1036 1396,1032 Z" fill="#fff150" stroke="#d07a20"/>
<path d="M1398,1017 Q1407,1021 1416,1017" fill="none" stroke="#c98a4e" stroke-width="1.5"/>
<path d="M1404,1025 L1414,1018" stroke="#8a4a1c" stroke-width="1.3"/>

<path d="M1400,968 Q1396,962 1401,961 Q1405,963 1402,968" fill="#8a4a1c"/><path d="M1408,969 Q1408,963 1411,965" fill="none" stroke-width="1.5"/>
<circle cx="1389.5" cy="977.5" r="7.5" fill="#c98a4e"/><circle cx="1423.5" cy="977.5" r="7.5" fill="#c98a4e"/>
<circle cx="1388" cy="976" r="3" fill="#f4b8a0" stroke="none"/><circle cx="1425" cy="976" r="3" fill="#f4b8a0" stroke="none"/>
<ellipse cx="1406.5" cy="996.5" rx="27" ry="24" fill="#c98a4e"/>
<ellipse cx="1406.5" cy="1000.5" rx="20.5" ry="17" fill="#fff150" stroke="#d07a20"/>
<circle cx="1393" cy="1024" r="2.5" fill="#c98a4e"/><circle cx="1402" cy="1025" r="2.5" fill="#c98a4e"/><circle cx="1397" cy="1030" r="7" fill="#c98a4e"/>

</g>
<circle cx="1395.5" cy="993.5" r="1.5" fill="#5a2a10"/><circle cx="1417" cy="993.5" r="1.5" fill="#5a2a10"/>
<path d="M1405,997.5 h3" stroke="#5a2a10" stroke-width="1.2"/>
<circle cx="1391" cy="1000" r="3.2" fill="#f0a030" opacity=".8"/><circle cx="1421" cy="1000" r="3.2" fill="#f0a030" opacity=".8"/>
<circle cx="1395" cy="1031" r="1.2" fill="#f090c0"/><circle cx="1401" cy="1031" r="1.2" fill="#f090c0"/>
<circle cx="1367.5" cy="1005" r="8.5" fill="#8b5e4b"/>
<text x="1367.5" y="1010" font-size="12" text-anchor="middle" fill="#fff" font-family="Liberation Sans">A</text>
<circle cx="1374" cy="1026" r="8.5" fill="#8b5e4b"/>
<path d="M1369,1022 L1372,1020 Q1374,1022 1376,1020 L1379,1022 L1378,1025 L1377,1024 V1030 H1371 V1024 L1370,1025Z" fill="#fff"/>
<g stroke="#8a4a1c" stroke-width="1.2">
<path d="M1434,971 h6 l1,8 l2,-8 h4 l2,8 l1,-8 h6 l-4,19 h-5 l-2,-7 l-2,7 h-5z" fill="#fff"/>
<circle cx="1440" cy="978" r="1.8" fill="#d8a070" stroke="none"/><circle cx="1452" cy="986" r="1.8" fill="#d8a070" stroke="none"/>
<circle cx="1437.5" cy="992" r="3.5" fill="#d8945a"/><circle cx="1454" cy="992" r="3.5" fill="#d8945a"/>
<ellipse cx="1445.5" cy="1002" rx="9" ry="10.5" fill="#d8945a"/>
<ellipse cx="1445.5" cy="1002" rx="3" ry="4.5" fill="#fff"/>
<path d="M1436,1012 h6 l1,8 l2,-8 h4 l2,8 l1,-8 h6 l-4,21 h-5 l-2,-8 l-2,8 h-5z" fill="#fff150"/>
</g>
</svg>

</body></html>
